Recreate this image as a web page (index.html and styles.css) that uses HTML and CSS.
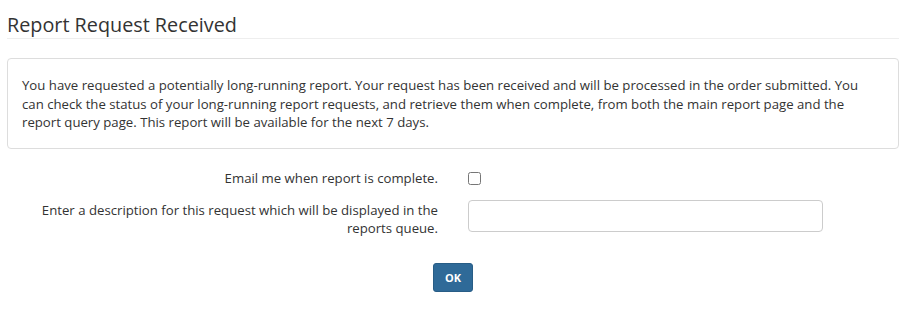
FILE: index.html
```html
<!DOCTYPE html>
<html>
<head>
<meta charset="utf-8">
<link rel="stylesheet" href="styles.css">
</head>
<body>
<div class="page">
  <h1 class="title">Report Request Received</h1>
  <div class="notice">You have requested a potentially long-running report. Your request has been received and will be processed in the order submitted. You can check the status of your long-running report requests, and retrieve them when complete, from both the main report page and the report query page. This report will be available for the next 7 days.</div>
  <form class="form">
    <div class="row row-check">
      <label class="label" for="email">Email me when report is complete.</label>
      <div class="field"><input type="checkbox" id="email" class="check"></div>
    </div>
    <div class="row row-desc">
      <label class="label" for="desc">Enter a description for this request which will be displayed in the reports queue.</label>
      <div class="field"><input type="text" id="desc" class="text"></div>
    </div>
    <div class="actions">
      <button type="button" class="btn">OK</button>
    </div>
  </form>
</div>
</body>
</html>
```
FILE: styles.css
```css
* { box-sizing: border-box; }
html, body { margin: 0; padding: 0; background: #fff; }
body {
  font-family: "Open Sans", "Liberation Sans", sans-serif;
  font-size: 13.2px;
  color: #333;
}
.page { padding: 0 17px 0 7px; }
.title {
  margin: 0;
  padding-top: 12px;
  font-size: 19.8px;
  font-weight: 400;
  line-height: 26px;
  color: #333;
  padding-bottom: 0;
  border-bottom: 1px solid #eee;
}
.notice {
  margin-top: 19px;
  border: 1px solid #ddd;
  border-radius: 4px;
  padding: 17px 24px 16px 14px;
  line-height: 18.5px;
}
.form { margin-top: 19px; }
.row { display: flex; }
.label {
  width: 446px;
  padding: 0 15px;
  text-align: right;
  line-height: 18px;
}
.field { padding: 0 15px; }
.row-check { height: 22px; }
.row-check .label { padding-top: 1px; }
.check {
  margin: 4px 0 0 0;
  width: 13px;
  height: 13px;
}
.row-desc { margin-top: 10px; }
.row-desc .label { padding-top: 1px; padding-left: 30px; }
.text {
  width: 355px;
  height: 32px;
  border: 1px solid #ccc;
  border-radius: 4px;
  margin: 0;
  font: inherit;
}
.actions {
  margin-top: 26px;
  display: flex;
  justify-content: center;
}
.btn {
  width: 40px;
  height: 29px;
  background: #2f6a98;
  border: 1px solid #285d86;
  border-radius: 3px;
  color: #fff;
  font-family: "Open Sans", "Liberation Sans", sans-serif;
  font-weight: 700;
  font-size: 11px;
  padding: 0;
}
```
